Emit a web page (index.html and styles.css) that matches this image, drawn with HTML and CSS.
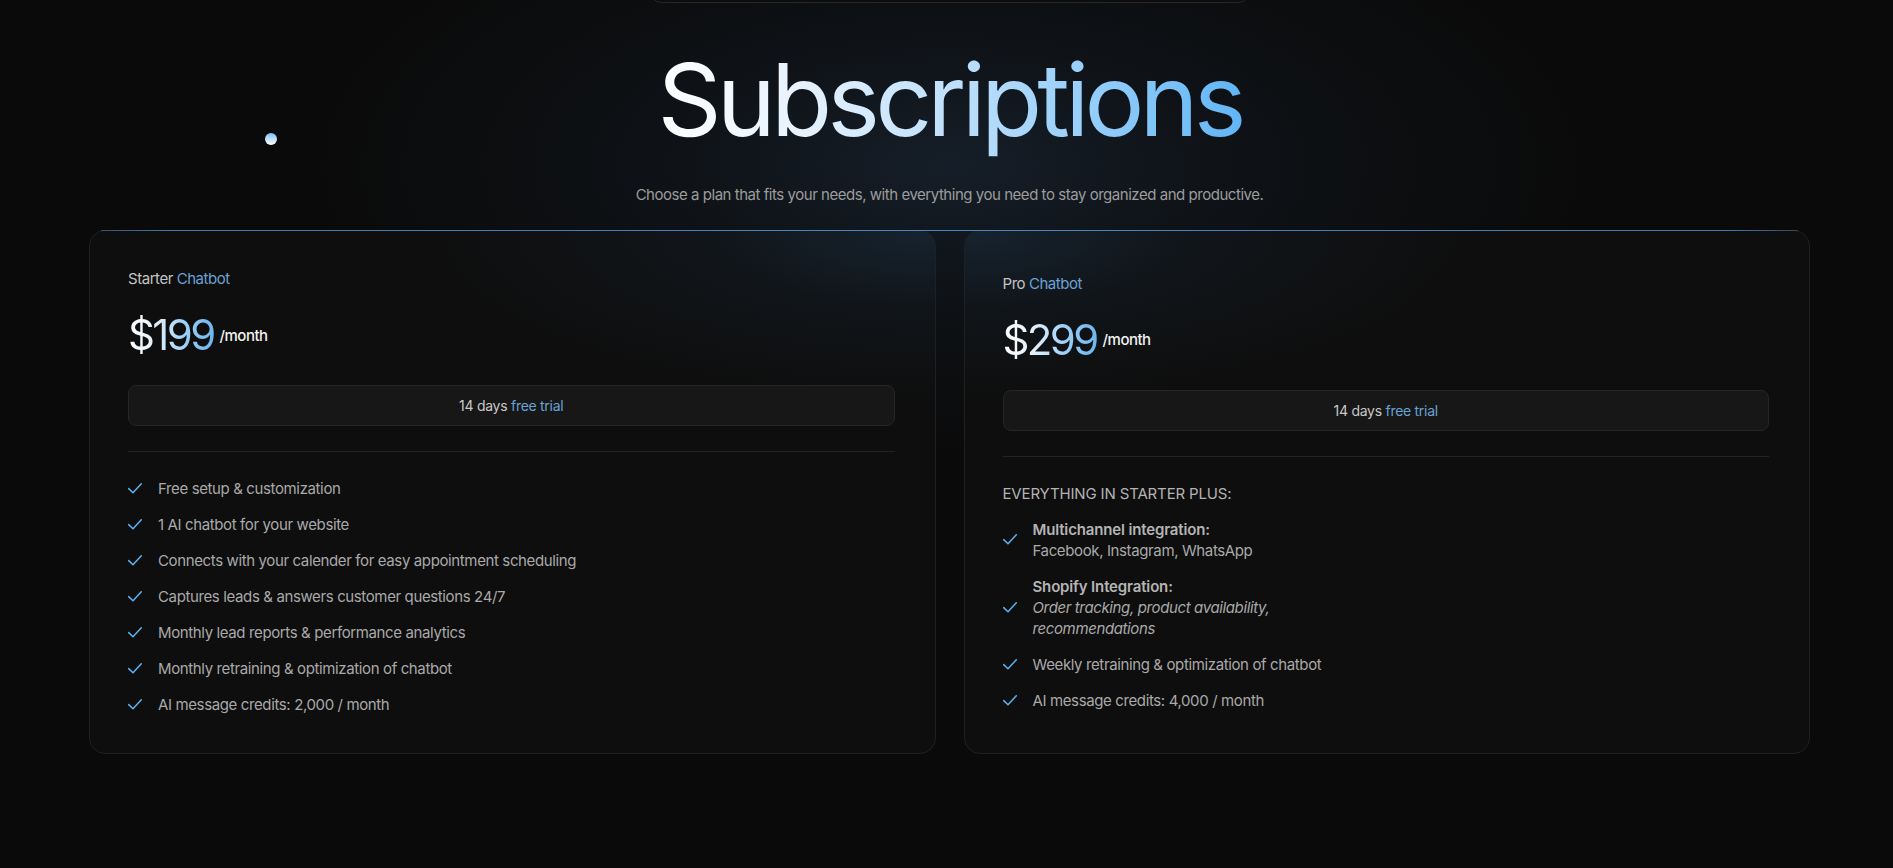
FILE: index.html
```html
<!DOCTYPE html>
<html lang="en">
<head>
<meta charset="utf-8">
<title>Subscriptions</title>
<link rel="stylesheet" href="styles.css">
</head>
<body>
<main class="page">
  <div class="nav-stub"></div>
  <span class="orb"></span>
  <h1 class="title">Subscriptions</h1>
  <p class="subtitle">Choose a plan that fits your needs, with everything you need to stay organized and productive.</p>

  <section class="plans">
    <article class="card card-left">
      <div class="plan-name">Starter <span class="accent">Chatbot</span></div>
      <div class="price-row"><span class="price">$199</span><span class="per">/month</span></div>
      <div class="trial"><span>14 days <span class="accent">free trial</span></span></div>
      <hr class="divider">
      <ul class="features">
        <li><svg class="check" viewBox="0 0 14 11"><path d="M0.7 5.6 L5 9.8 L13.3 0.8"/></svg><span>Free setup &amp; customization</span></li>
        <li><svg class="check" viewBox="0 0 14 11"><path d="M0.7 5.6 L5 9.8 L13.3 0.8"/></svg><span>1 AI chatbot for your website</span></li>
        <li><svg class="check" viewBox="0 0 14 11"><path d="M0.7 5.6 L5 9.8 L13.3 0.8"/></svg><span>Connects with your calender for easy appointment scheduling</span></li>
        <li><svg class="check" viewBox="0 0 14 11"><path d="M0.7 5.6 L5 9.8 L13.3 0.8"/></svg><span>Captures leads &amp; answers customer questions 24/7</span></li>
        <li><svg class="check" viewBox="0 0 14 11"><path d="M0.7 5.6 L5 9.8 L13.3 0.8"/></svg><span>Monthly lead reports &amp; performance analytics</span></li>
        <li><svg class="check" viewBox="0 0 14 11"><path d="M0.7 5.6 L5 9.8 L13.3 0.8"/></svg><span>Monthly retraining &amp; optimization of chatbot</span></li>
        <li><svg class="check" viewBox="0 0 14 11"><path d="M0.7 5.6 L5 9.8 L13.3 0.8"/></svg><span>AI message credits: 2,000 / month</span></li>
      </ul>
    </article>

    <article class="card card-right">
      <div class="plan-name">Pro <span class="accent">Chatbot</span></div>
      <div class="price-row"><span class="price">$299</span><span class="per">/month</span></div>
      <div class="trial"><span>14 days <span class="accent">free trial</span></span></div>
      <hr class="divider">
      <ul class="features">
        <li class="label">EVERYTHING IN STARTER PLUS:</li>
        <li><svg class="check" viewBox="0 0 14 11"><path d="M0.7 5.6 L5 9.8 L13.3 0.8"/></svg><span class="item-text"><strong>Multichannel integration:</strong><br>Facebook, Instagram, WhatsApp</span></li>
        <li><svg class="check" viewBox="0 0 14 11"><path d="M0.7 5.6 L5 9.8 L13.3 0.8"/></svg><span class="item-text"><strong>Shopify Integration:</strong><br><em>Order tracking, product availability, recommendations</em></span></li>
        <li><svg class="check" viewBox="0 0 14 11"><path d="M0.7 5.6 L5 9.8 L13.3 0.8"/></svg><span class="item-text">Weekly retraining &amp; optimization of chatbot</span></li>
        <li><svg class="check" viewBox="0 0 14 11"><path d="M0.7 5.6 L5 9.8 L13.3 0.8"/></svg><span class="item-text">AI message credits: 4,000 / month</span></li>
      </ul>
    </article>
  </section>
</main>
</body>
</html>
```

FILE: styles.css
```css
* { box-sizing: border-box; }

html, body {
  margin: 0;
  padding: 0;
  height: 100%;
}

body {
  background-color: #0a0a0a;
  background-image: radial-gradient(ellipse 640px 290px at calc(50% + 3px) 165px, rgba(22, 31, 42, 0.95) 0%, rgba(16, 21, 27, 0.7) 45%, rgba(10, 10, 10, 0) 100%);
  background-repeat: no-repeat;
  color: #a8a8a8;
  font-family: "Inter", "Noto Sans", sans-serif;
  overflow: hidden;
}

.page {
  position: relative;
  display: flex;
  flex-direction: column;
  align-items: center;
  padding-left: 6px;
  min-height: 100%;
}

.nav-stub {
  width: 604px;
  height: 50px;
  margin-top: -47px;
  border: 1px solid #262626;
  border-radius: 14px;
  background: #0d0d0d;
}

.orb {
  position: absolute;
  left: 265px;
  top: 133px;
  width: 12px;
  height: 12px;
  border-radius: 50%;
  background: linear-gradient(180deg, #7cc0f5 0%, #ffffff 100%);
}

.title {
  margin: 37px 0 0;
  padding: 0 6px 8px;
  font-size: 100px;
  line-height: 120px;
  font-weight: 400;
  letter-spacing: -0.049em;
  background: linear-gradient(90deg, #ffffff 0%, #e6f2fd 25%, #bfe0fb 50%, #93cdf9 75%, #5fb4f5 100%);
  -webkit-background-clip: text;
  background-clip: text;
  color: transparent;
}

.subtitle {
  margin: 16px 0 0;
  font-size: 15px;
  line-height: 22px;
  color: #9c9c9c;
  letter-spacing: -0.031em;
}

.plans {
  position: relative;
  width: 1721px;
  margin-top: 24px;
  display: grid;
  grid-template-columns: 1fr 1fr;
  gap: 28px;
}

.plans::before {
  content: "";
  position: absolute;
  left: 12px;
  right: 12px;
  top: 0;
  height: 1px;
  background: linear-gradient(90deg, rgba(74, 135, 192, 0.5) 0%, rgba(74, 135, 192, 0.85) 4%, rgba(80, 145, 205, 0.9) 50%, rgba(74, 135, 192, 0.85) 96%, rgba(74, 135, 192, 0.4) 100%);
  z-index: 1;
}

.card {
  display: flex;
  flex-direction: column;
  justify-content: center;
  padding: 37px 40px 38px 38px;
  border: 1px solid #202020;
  border-radius: 16px;
  background-color: #0e0e0e;
}

.card-left {
  background-image: radial-gradient(ellipse 520px 170px at 100% 0%, rgba(26, 44, 62, 0.7) 0%, rgba(20, 31, 42, 0.4) 45%, rgba(14, 14, 14, 0) 100%);
  background-repeat: no-repeat;
}

.card-right {
  background-image: radial-gradient(ellipse 520px 170px at 0% 0%, rgba(26, 44, 62, 0.7) 0%, rgba(20, 31, 42, 0.4) 45%, rgba(14, 14, 14, 0) 100%);
  background-repeat: no-repeat;
}

.plan-name {
  font-size: 15px;
  line-height: 21px;
  color: #c4c4c4;
  letter-spacing: -0.03em;
}

.accent {
  color: #6aa2d4;
}

.price-row {
  display: flex;
  align-items: center;
  margin-top: 24px;
}

.price {
  font-size: 42px;
  line-height: 44px;
  font-weight: 400;
  letter-spacing: -0.063em;
  background: linear-gradient(90deg, #ffffff 0%, #dcedfb 35%, #9ccff6 65%, #66b3ee 100%);
  -webkit-background-clip: text;
  background-clip: text;
  color: transparent;
  padding-right: 3px;
}

.per {
  margin-left: 3px;
  font-size: 15px;
  font-weight: 500;
  color: #f2f2f2;
  letter-spacing: -0.035em;
}

.trial {
  margin-top: 28px;
  height: 41px;
  display: flex;
  align-items: center;
  justify-content: center;
  border: 1px solid #262626;
  border-radius: 8px;
  background: #171717;
  font-size: 14px;
  color: #c8c8c8;
  letter-spacing: -0.02em;
}

.divider {
  margin: 25px 0 0;
  border: 0;
  height: 1px;
  background: #232323;
}

.features {
  list-style: none;
  margin: 26px 0 0;
  padding: 0;
  display: flex;
  flex-direction: column;
  gap: 15px;
}

.features li {
  display: flex;
  align-items: center;
  font-size: 15px;
  line-height: 21px;
  color: #a9a9a9;
  letter-spacing: -0.025em;
}

.features li.label {
  font-size: 15px;
  color: #b3b3b3;
  letter-spacing: -0.01em;
}

.check {
  flex: none;
  width: 14px;
  height: 11px;
  margin-right: 16px;
  fill: none;
  stroke: #58adec;
  stroke-width: 1.6;
  stroke-linecap: round;
  stroke-linejoin: round;
}

.item-text {
  max-width: 310px;
}

.item-text strong {
  font-weight: 600;
  color: #b4b4b4;
  letter-spacing: -0.01em;
}

.item-text em {
  font-style: italic;
}
```
